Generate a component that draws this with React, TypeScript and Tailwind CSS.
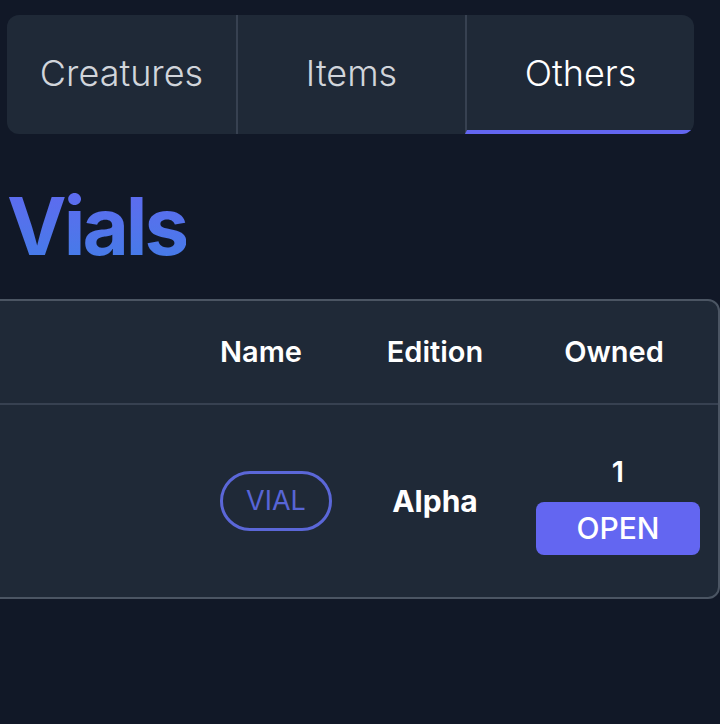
import React from "react";

const font = { fontFamily: "Inter, 'Noto Sans', sans-serif" };

export default function App() {
  return (
    <div className="min-h-[724px] w-[720px] overflow-hidden bg-[#111827] text-white" style={font}>
      <div className="pl-[7px] pt-[15px]">
        <div className="flex h-[119px] w-[687px] overflow-hidden rounded-xl bg-[#1f2937]">
          <button className="flex w-[229px] items-center justify-center pb-[3px] text-[36px] font-light text-[#d1d5db]">
            Creatures
          </button>
          <button className="flex w-[229px] items-center justify-center border-l-2 border-[#374151] pb-[3px] text-[36px] font-light text-[#d1d5db]">
            Items
          </button>
          <button className="flex w-[229px] items-center justify-center border-b-4 border-l-2 border-b-[#6366f1] border-l-[#374151] pt-[1px] text-[36px] font-light text-white">
            Others
          </button>
        </div>
      </div>

      <div className="ml-[7px] mt-[39px] h-[106px]">
        <h1 className="inline-block bg-gradient-to-b from-[#6366f1] to-[#3b7fe6] bg-clip-text text-[80px] font-bold leading-[106px] tracking-[-3px] text-transparent">
          Vials
        </h1>
      </div>

      <div className="-ml-[40px] mt-[20px] w-[760px] rounded-xl border-2 border-[#4b5563] bg-[#1f2937]">
        <div className="flex h-[104px] items-center border-b-2 border-[#374151] text-[29px] font-semibold">
          <div className="w-[258px] shrink-0" />
          <div className="w-[128px] shrink-0">Name</div>
          <div className="w-[174px] shrink-0 text-center">Edition</div>
          <div className="w-[184px] shrink-0 text-center">Owned</div>
        </div>
        <div className="flex h-[192px] items-center">
          <div className="w-[258px] shrink-0" />
          <div className="w-[128px] shrink-0">
            <span className="inline-flex h-[60px] w-[112px] items-center justify-center rounded-full border-[3px] border-[#5b67d8] text-[27px] font-normal text-[#5865d6]">
              VIAL
            </span>
          </div>
          <div className="w-[174px] shrink-0 text-center text-[30px] font-bold">Alpha</div>
          <div className="flex w-[184px] shrink-0 flex-col items-center pl-[8px] pt-[6px]">
            <div className="text-[29px] font-semibold leading-[36px]">1</div>
            <button className="mt-[12px] h-[53px] w-[164px] rounded-lg bg-[#6366f1] text-[30px] font-medium leading-none text-white">
              OPEN
            </button>
          </div>
        </div>
      </div>
    </div>
  );
}
